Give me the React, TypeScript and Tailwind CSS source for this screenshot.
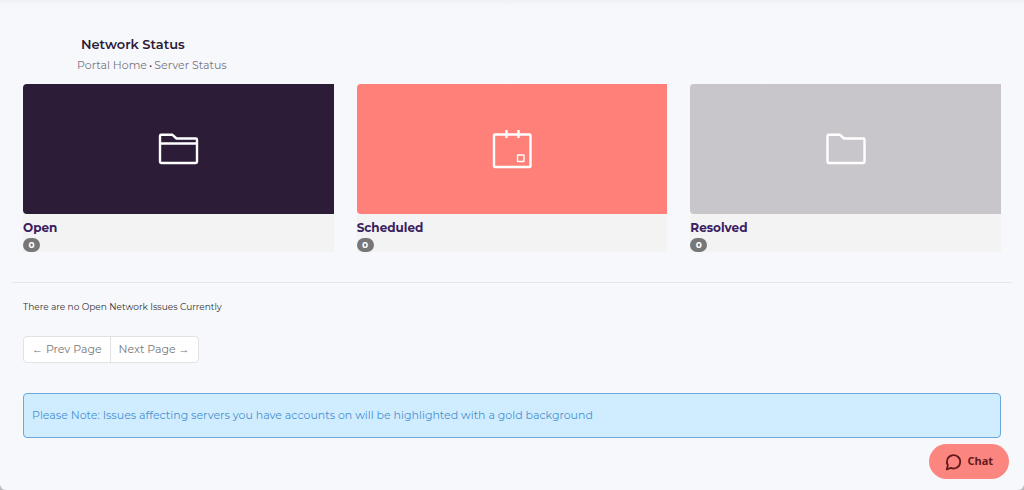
import type { ReactNode } from "react";

type Status = { label: string; count: number; tile: string; icon: ReactNode };

function FolderOpenIcon() {
  return (
    <svg aria-hidden="true" className="h-12 w-12" viewBox="0 0 48 48" fill="none" stroke="white" strokeWidth="2.4" strokeLinejoin="round">
      <path d="M6 11Q6 9.800 7.200 9.800H18.500L22.500 13.500H41.800Q43 13.500 43 14.700V36.800Q43 38 41.800 38H7.200Q6 38 6 36.800Z" />
      <path d="M6 18.500H43" />
    </svg>
  );
}

function FolderIcon() {
  return (
    <svg aria-hidden="true" className="h-12 w-12" viewBox="0 0 48 48" fill="none" stroke="white" strokeWidth="2.4" strokeLinejoin="round">
      <path d="M5.500 11Q5.500 9.800 6.700 9.800H18L22 13.500H41.300Q42.500 13.500 42.500 14.700V36.800Q42.500 38 41.300 38H6.700Q5.500 38 5.500 36.800Z" />
    </svg>
  );
}

function CalendarIcon() {
  return (
    <svg aria-hidden="true" className="h-12 w-12" viewBox="0 0 48 48" fill="none" stroke="white" strokeWidth="2.4" strokeLinejoin="round">
      <rect x="6" y="9.500" width="36.500" height="32.500" rx="1" />
      <path d="M18.500 5V13M30.500 5V13" />
      <rect x="29.500" y="30" width="6.500" height="6.500" rx="0.500" strokeWidth="1.400" />
    </svg>
  );
}

const statuses: Status[] = [
  { label: "Open", count: 0, tile: "bg-[#2c1c38]", icon: <FolderOpenIcon /> },
  { label: "Scheduled", count: 0, tile: "bg-[#ff8079]", icon: <CalendarIcon /> },
  { label: "Resolved", count: 0, tile: "bg-[#c8c6cb]", icon: <FolderIcon /> },
];

function StatusCard({ label, count, tile, icon }: Status) {
  return (
    <a href="#" className="block bg-[#f3f3f3]">
      <div className={`flex h-[130px] items-center justify-center rounded-l ${tile}`}>{icon}</div>
      <div className="pt-1">
        <div className="text-xs leading-5 font-bold text-[#3a2060]">{label}</div>
        <span className="flex h-[14px] w-[17px] items-center justify-center rounded-full bg-[#777] text-[9px] font-bold text-white">
          {count}
        </span>
      </div>
    </a>
  );
}

export default function App() {
  return (
    <div className="min-h-screen bg-[#b9b9be] font-['Montserrat','Inter',sans-serif]">
      <div className="min-h-screen rounded-b-md bg-[#f7f8fc] bg-linear-to-b from-[#eff0f5] to-[#f7f8fc] to-[6px] px-3 pt-9">
        <header className="px-[65px]">
          <h1 className="px-1 text-[13px] leading-4 font-semibold text-[#2c1c38]">Network Status</h1>
          <nav aria-label="Breadcrumb" className="flex gap-[2px] pt-[5px] pb-[11px] text-[11px] leading-4 text-[#77767d]">
            <a href="#">Portal Home</a>
            <span className="text-[#2c1c38]">•</span>
            <a href="#">Server Status</a>
          </nav>
        </header>

        <main>
          <div className="grid grid-cols-3 gap-[23px] px-[11px]">
            {statuses.map((s) => (
              <StatusCard key={s.label} {...s} />
            ))}
          </div>
          <hr className="mt-[30px] border-[#e5e5ea]" />
          <div className="px-[11px]">
            <p className="pt-4 text-[9px] leading-4 text-[#333]">There are no Open Network Issues Currently</p>
            <div className="mt-[21px] flex w-fit rounded border border-[#e2e2e5] bg-white text-[11px] leading-[25px] text-[#777]">
              <button type="button" className="border-r border-[#e2e2e5] px-2">
                <span className="font-['Liberation_Sans',sans-serif]">←</span> Prev Page
              </button>
              <button type="button" className="px-2">
                Next Page <span className="font-['Liberation_Sans',sans-serif]">→</span>
              </button>
            </div>
            <div className="mt-[30px] flex h-[45px] items-center rounded border border-[#6ba8dc] bg-[#d0edff] px-2 text-[11px] text-[#4a90d0]">
              Please Note: Issues affecting servers you have accounts on will be highlighted with a gold background
            </div>
          </div>
        </main>

        <button
          type="button"
          className="fixed right-[15px] bottom-[11px] flex h-[35px] items-center gap-1 rounded-full bg-[#fb8680] px-4 font-['Noto_Sans',sans-serif] text-[11px] font-bold text-[#64191b]"
        >
          <svg aria-hidden="true" className="h-[18px] w-[18px]" viewBox="0 0 17 17" fill="none" stroke="currentColor" strokeWidth="1.700" strokeLinecap="round" strokeLinejoin="round">
            <path d="M2.700 11.600A6.300 6.300 0 1 1 5.600 14.100L1.600 15.500Z" />
          </svg>
          Chat
        </button>
      </div>
    </div>
  );
}
